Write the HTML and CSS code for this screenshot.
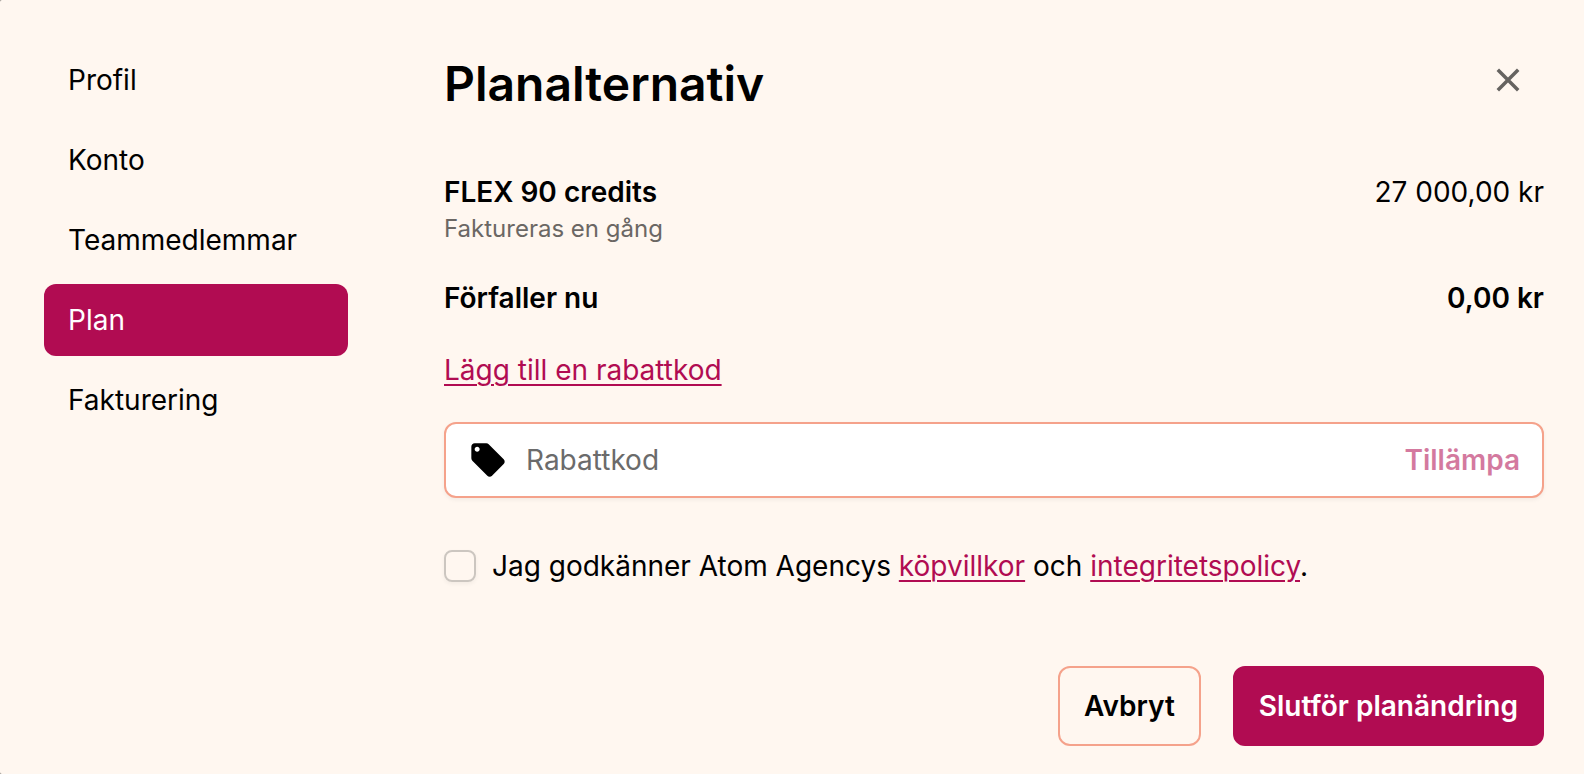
FILE: index.html
```html
<!DOCTYPE html>
<html lang="sv">
<head>
  <meta charset="UTF-8">
  <meta name="viewport" content="width=device-width, initial-scale=1.0">
  <title>Planalternativ</title>
  <link rel="stylesheet" href="styles.css">
</head>
<body>
  <div class="modal">
    <nav class="sidebar">
      <a class="nav-item" href="#profil">Profil</a>
      <a class="nav-item" href="#konto">Konto</a>
      <a class="nav-item" href="#team">Teammedlemmar</a>
      <a class="nav-item active" href="#plan">Plan</a>
      <a class="nav-item" href="#fakturering">Fakturering</a>
    </nav>

    <main class="content">
      <header class="content-header">
        <h1>Planalternativ</h1>
        <button class="close-button" type="button" aria-label="Stäng">
          <svg viewBox="0 0 24 24" width="24" height="24" fill="none" stroke="currentColor" stroke-width="3.5">
            <path d="M1.8 1.8l20.4 20.4M22.2 1.8L1.8 22.2"/>
          </svg>
        </button>
      </header>

      <div class="summary-row">
        <div>
          <div class="strong">FLEX 90 credits</div>
          <div class="note">Faktureras en gång</div>
        </div>
        <div>27 000,00 kr</div>
      </div>

      <div class="summary-row strong due-row">
        <div>Förfaller nu</div>
        <div>0,00 kr</div>
      </div>

      <a class="link discount-link" href="#rabattkod">Lägg till en rabattkod</a>

      <div class="discount-box">
        <svg class="tag-icon" viewBox="0 0 24 24" width="40" height="40">
          <path d="M21.41 11.58l-9-9C12.05 2.22 11.55 2 11 2H4c-1.1 0-2 .9-2 2v7c0 .55.22 1.05.59 1.42l9 9c.36.36.86.58 1.41.58s1.05-.22 1.41-.59l7-7c.37-.36.59-.86.59-1.41s-.23-1.06-.59-1.42zM5.5 7C4.67 7 4 6.33 4 5.5S4.67 4 5.5 4 7 4.67 7 5.5 6.33 7 5.5 7z"/>
        </svg>
        <input class="discount-input" id="rabattkod" type="text" placeholder="Rabattkod" aria-label="Rabattkod">
        <button class="apply-button" type="button" disabled>Tillämpa</button>
      </div>

      <div class="terms">
        <input class="terms-check" id="terms" type="checkbox">
        <label for="terms">Jag godkänner Atom Agencys <a class="link" href="#kopvillkor">köpvillkor</a> och <a class="link" href="#integritet">integritetspolicy</a>.</label>
      </div>

      <div class="actions">
        <button class="button button-outline" type="button">Avbryt</button>
        <button class="button button-primary" type="button">Slutför planändring</button>
      </div>
    </main>
  </div>
</body>
</html>
```
FILE: styles.css
```css
* {
  box-sizing: border-box;
}

html {
  background-color: #8c8884;
}

body {
  margin: 0;
  font-family: Inter, sans-serif;
  font-size: 28px;
  line-height: 40px;
  color: #000;
}

button, input {
  font: inherit;
  color: inherit;
}

button {
  cursor: pointer;
}

.modal {
  display: flex;
  gap: 96px;
  min-height: 100vh;
  padding: 44px 40px 28px 44px;
  background-color: #fff7f0;
  border-radius: 2px 0 0 2px;
}

.sidebar {
  display: flex;
  flex-direction: column;
  flex: 0 0 304px;
  gap: 8px;
}

.nav-item {
  padding: 16px 24px;
  border-radius: 12px;
  color: #000;
  text-decoration: none;
}

.nav-item.active {
  background-color: #b10c52;
  color: #fff;
}

.content {
  flex: 1;
  min-width: 0;
}

.content-header {
  display: flex;
  justify-content: space-between;
  align-items: flex-start;
  margin-bottom: 48px;
}

h1 {
  margin: 0;
  font-size: 48px;
  line-height: 80px;
  font-weight: 600;
}

.close-button {
  display: flex;
  padding: 24px;
  border: none;
  background: none;
  color: #666360;
}

.summary-row {
  display: flex;
  justify-content: space-between;
}

.strong {
  font-weight: 600;
}

.note {
  font-size: 24px;
  line-height: 34px;
  color: #6b6764;
}

.due-row {
  margin: 32px 0;
}

.link {
  color: #b10c52;
  text-decoration: underline;
  text-decoration-thickness: 2px;
  text-underline-offset: 4px;
}

.discount-link {
  display: table;
}

.discount-box {
  display: flex;
  align-items: center;
  margin-top: 32px;
  padding: 16px 22px;
  border: 2px solid #f5a28b;
  border-radius: 12px;
  background-color: #fff;
  box-shadow: 0 2px 4px rgba(0, 0, 0, 0.05);
}

.tag-icon {
  flex: none;
  margin-right: 18px;
}

.discount-input {
  flex: 1;
  min-width: 0;
  height: 40px;
  padding: 0;
  border: none;
  outline: none;
  background: none;
}

.discount-input::placeholder {
  color: #6b6b6b;
  opacity: 1;
}

.apply-button {
  padding: 0;
  border: none;
  background: none;
  font-weight: 600;
  color: #b10c52;
  opacity: 0.55;
}

.terms {
  display: flex;
  align-items: center;
  gap: 16px;
  margin: 48px 0 80px;
}

.terms-check {
  appearance: none;
  flex: none;
  width: 32px;
  height: 32px;
  margin: 0;
  border: 2px solid #ccc6c0;
  border-radius: 8px;
  box-shadow: 0 2px 4px rgba(0, 0, 0, 0.05);
}

.terms-check:checked {
  background-color: #b10c52;
}

.actions {
  display: flex;
  justify-content: flex-end;
  gap: 32px;
}

.button {
  padding: 18px 24px;
  border: 2px solid #b10c52;
  border-radius: 12px;
  font-weight: 600;
}

.button-outline {
  border-color: #f5a28b;
  background: none;
}

.button-primary {
  background-color: #b10c52;
  color: #fff;
}
```
